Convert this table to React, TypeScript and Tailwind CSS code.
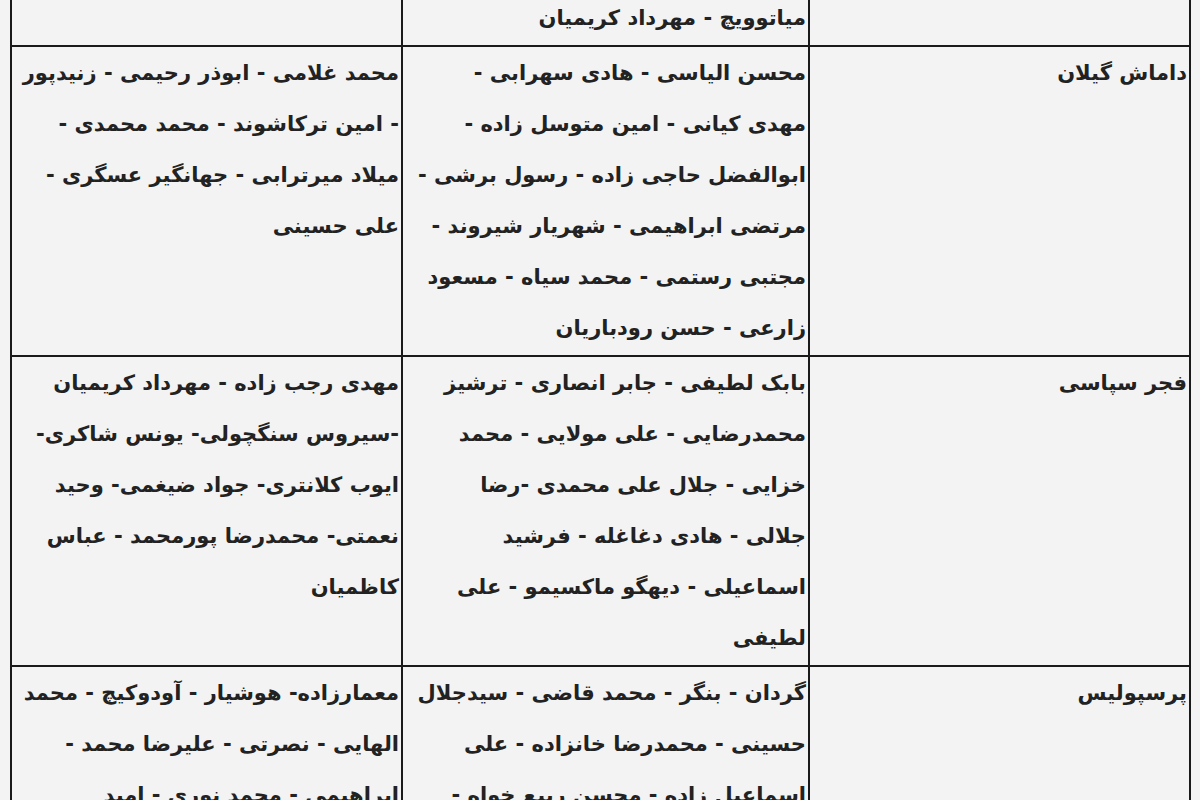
const rows: { team: string; mid: string[]; left: string[] }[] = [
  {
    team: '',
    mid: ['میاتوویچ - مهرداد کریمیان'],
    left: [],
  },
  {
    team: 'داماش گیلان',
    mid: [
      'محسن الیاسی - هادی سهرابی -',
      'مهدی کیانی - امین متوسل زاده -',
      'ابوالفضل حاجی زاده - رسول برشی -',
      'مرتضی ابراهیمی - شهریار شیروند -',
      'مجتبی رستمی - محمد سیاه - مسعود',
      'زارعی - حسن رودباریان',
    ],
    left: [
      'محمد غلامی - ابوذر رحیمی - زنیدپور',
      '- امین ترکاشوند - محمد محمدی -',
      'میلاد میرترابی - جهانگیر عسگری -',
      'علی حسینی',
    ],
  },
  {
    team: 'فجر سپاسی',
    mid: [
      'بابک لطیفی - جابر انصاری - ترشیز',
      'محمدرضایی - علی مولایی - محمد',
      'خزایی - جلال علی محمدی -رضا',
      'جلالی - هادی دغاغله - فرشید',
      'اسماعیلی - دیهگو ماکسیمو - علی',
      'لطیفی',
    ],
    left: [
      'مهدی رجب زاده - مهرداد کریمیان',
      '-سیروس سنگچولی- یونس شاکری-',
      'ایوب کلانتری- جواد ضیغمی- وحید',
      'نعمتی- محمدرضا پورمحمد - عباس',
      'کاظمیان',
    ],
  },
  {
    team: 'پرسپولیس',
    mid: [
      'گردان - بنگر - محمد قاضی - سیدجلال',
      'حسینی - محمدرضا خانزاده - علی',
      'اسماعیل زاده - محسن ربیع خواه -',
      'مهرداد پولادی - غلامرضا رضایی',
    ],
    left: [
      'معمارزاده- هوشیار - آودوکیچ - محمد',
      'الهایی - نصرتی - علیرضا محمد -',
      'ابراهیمی - محمد نوری - امید',
      'کریم انصاری فرد',
    ],
  },
]

function Lines({ lines }: { lines: string[] }) {
  return (
    <>
      {lines.map((l, i) => (
        <div key={i} className="whitespace-nowrap">
          {l}
        </div>
      ))}
    </>
  )
}

export default function App() {
  return (
    <div className="h-[800px] overflow-hidden bg-[#f3f3f3] pl-[10px]">
      <table
        dir="rtl"
        className="-mt-[10px] w-[1181px] table-fixed border-collapse text-[21px] font-bold leading-[51px] text-[#222222]"
        style={{ fontFamily: '"DejaVu Sans", Tahoma, sans-serif' }}
      >
        <colgroup>
          <col className="w-[381px]" />
          <col className="w-[407px]" />
          <col className="w-[391px]" />
        </colgroup>
        <tbody>
          {rows.map((r, i) => (
            <tr key={i}>
              <td className="overflow-hidden border-2 border-[#1a1a1a] px-[2px] py-[1px] align-top">
                {r.team}
              </td>
              <td className="overflow-hidden border-2 border-[#1a1a1a] px-[2px] py-[1px] align-top">
                <Lines lines={r.mid} />
              </td>
              <td className="overflow-hidden border-2 border-[#1a1a1a] px-[2px] py-[1px] align-top">
                <Lines lines={r.left} />
              </td>
            </tr>
          ))}
        </tbody>
      </table>
    </div>
  )
}
